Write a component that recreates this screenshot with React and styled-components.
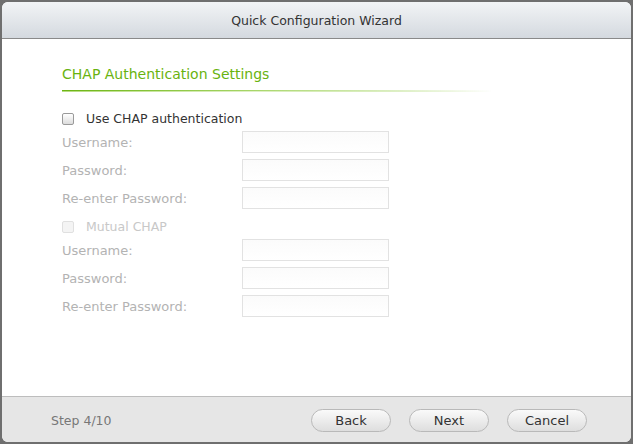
import React from 'react';
import styled, { createGlobalStyle } from 'styled-components';

//* ======================
//*     STYLED_COMPONENT
//* ======================
const GlobalStyle = createGlobalStyle`
  html, body {
    margin: 0;
    padding: 0;
    background: #6f6f6f;
  }
  body {
    padding: 2px;
    font-family: 'DejaVu Sans', Verdana, sans-serif;
  }
`;
const Window = styled.div`
  height: 440px;
  display: flex;
  flex-direction: column;
  background: #fff;
  border-radius: 6px;
  overflow: hidden;
`;
const TitleBar = styled.div`
  height: 36px;
  flex: none;
  display: flex;
  align-items: center;
  justify-content: center;
  background: linear-gradient(#f2f4f6, #d4d9df);
  border-bottom: 1px solid #8a8a8a;
  font-size: 12.5px;
  color: #333;
`;
const Body = styled.div`
  flex: 1;
  padding: 26px 60px 0;
`;
const Heading = styled.h2`
  margin: 0;
  font-size: 14px;
  font-weight: normal;
  color: #69b30f;
  line-height: 18px;
`;
const HeadLine = styled.div`
  margin-top: 7px;
  width: 430px;
  height: 1px;
  border-bottom: 1px solid transparent;
  border-image: linear-gradient(to right, #b5dc7e, #dff0c6 45%, rgba(255, 255, 255, 0)) 1;
  background: linear-gradient(to right, #6cb414, #a8d66a 45%, rgba(255, 255, 255, 0));
`;
const CheckRow = styled.label`
  display: flex;
  align-items: center;
  height: 19px;
  margin-top: ${(p) => p.top || 0}px;
  font-size: 12.5px;
  color: ${(p) => (p.disabled ? '#c8c8c8' : '#333')};
`;
const Box = styled.span`
  width: 10px;
  height: 10px;
  margin-right: 12px;
  border: 1px solid ${(p) => (p.disabled ? '#e0e0e0' : '#9a9a9a')};
  border-radius: 2px;
  background: ${(p) =>
    p.disabled ? '#f4f4f4' : 'linear-gradient(#fff, #dcdcdc)'};
`;
const FieldRow = styled.div`
  display: grid;
  grid-template-columns: 180px 147px;
  align-items: center;
  height: 28px;
`;
const Label = styled.span`
  font-size: 13px;
  color: #b3b3b3;
`;
const Input = styled.div`
  height: 20px;
  border: 1px solid #e2e2e2;
  background: linear-gradient(#fbfbfb, #fff);
`;
const Footer = styled.div`
  height: 44px;
  flex: none;
  display: flex;
  align-items: center;
  padding: 1px 44px 0 49px;
  background: #e6e6e6;
  border-top: 1px solid #bdbdbd;
`;
const Step = styled.span`
  flex: 1;
  font-size: 12.5px;
  color: #777;
`;
const Buttons = styled.div`
  display: flex;
  gap: 18px;
`;
const Button = styled.button`
  width: 80px;
  height: 23px;
  padding: 0;
  border: 1px solid #b9b9b9;
  border-radius: 12px;
  background: linear-gradient(#fafafa, #dedede);
  font-family: inherit;
  font-size: 13px;
  color: #333;
`;

const fields = ['Username:', 'Password:', 'Re-enter Password:'];

const App = () => {
  //* ======================
  //*    RENDER
  //* ======================
  return (
    <>
      <GlobalStyle />
      <Window>
        <TitleBar>Quick Configuration Wizard</TitleBar>
        <Body>
          <Heading>CHAP Authentication Settings</Heading>
          <HeadLine />
          <CheckRow top={17}>
            <Box />
            Use CHAP authentication
          </CheckRow>
          {fields.map((f) => (
            <FieldRow key={'a' + f}>
              <Label>{f}</Label>
              <Input />
            </FieldRow>
          ))}
          <CheckRow top={5} disabled>
            <Box disabled />
            Mutual CHAP
          </CheckRow>
          {fields.map((f) => (
            <FieldRow key={'b' + f}>
              <Label>{f}</Label>
              <Input />
            </FieldRow>
          ))}
        </Body>
        <Footer>
          <Step>Step 4/10</Step>
          <Buttons>
            <Button>Back</Button>
            <Button>Next</Button>
            <Button>Cancel</Button>
          </Buttons>
        </Footer>
      </Window>
    </>
  );
};
export default App;
